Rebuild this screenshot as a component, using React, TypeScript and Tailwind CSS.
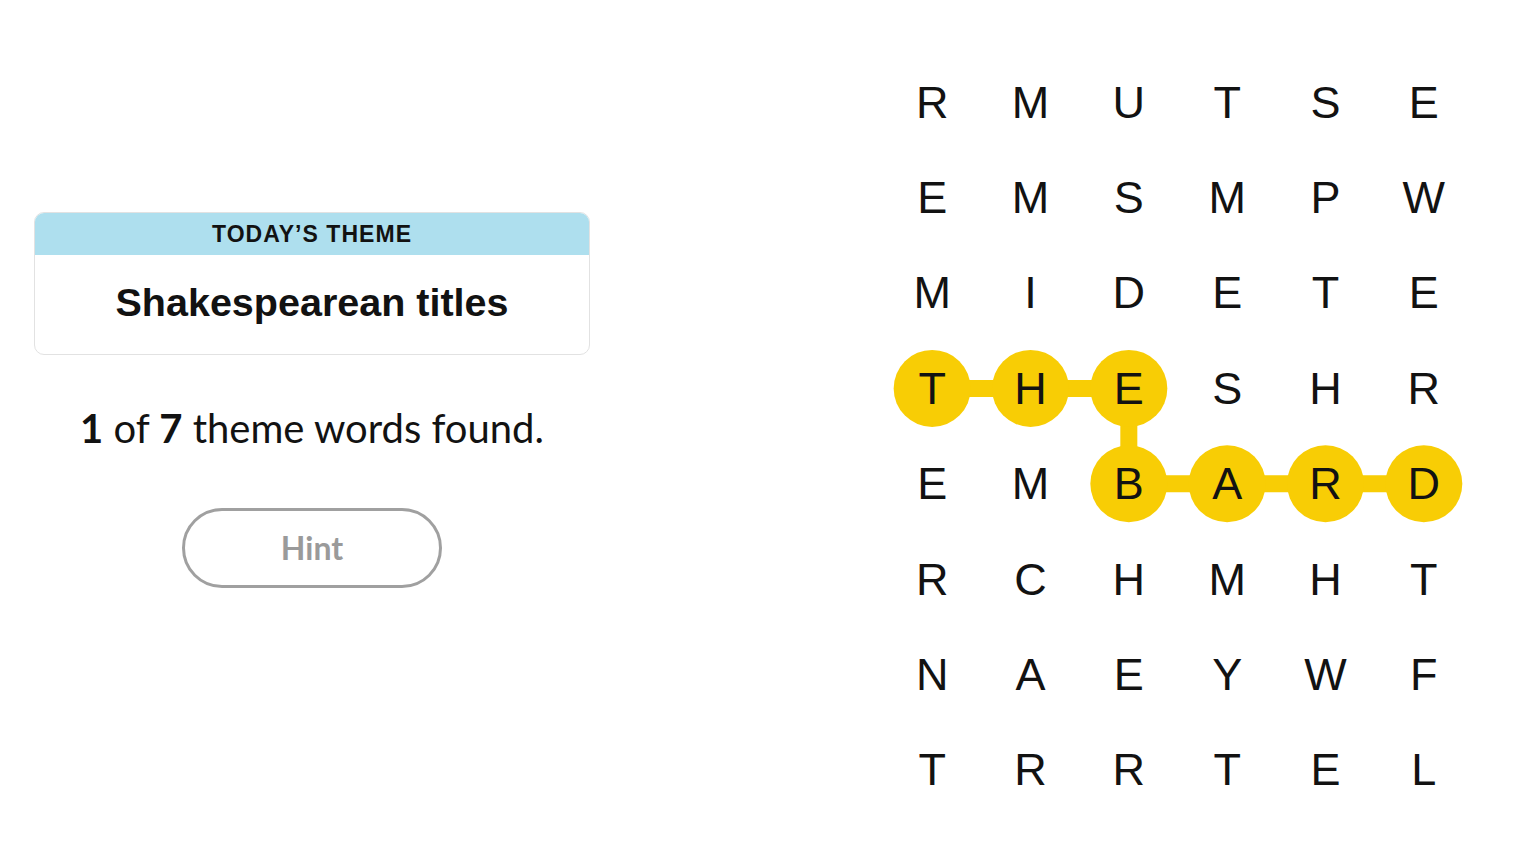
const grid = [
  "RMUTSE",
  "EMSMPW",
  "MIDETE",
  "THESHR",
  "EMBARD",
  "RCHMHT",
  "NAEYWF",
  "TRRTEL",
];

const CW = 98.33;
const RH = 95.4;

// spangram path: row, col
const path: [number, number][] = [
  [3, 0],
  [3, 1],
  [3, 2],
  [4, 2],
  [4, 3],
  [4, 4],
  [4, 5],
];

const center = ([r, c]: [number, number]) => [c * CW + CW / 2, r * RH + RH / 2 + 1.5];

function WordPath() {
  const pts = path.map(center);
  return (
    <svg className="absolute inset-0 pointer-events-none" width={590} height={763}>
      <polyline
        points={pts.map((p) => p.join(",")).join(" ")}
        fill="none"
        stroke="#f8cd05"
        strokeWidth={17}
      />
      {pts.map(([x, y], i) => (
        <circle key={i} cx={x} cy={y} r={38.5} fill="#f8cd05" />
      ))}
    </svg>
  );
}

export default function App() {
  return (
    <div className="flex h-[864px] w-[1536px] bg-white text-black">
      <div className="ml-[34px] mt-[212px] flex w-[556px] flex-col items-center">
        <div className="w-full overflow-hidden rounded-[10px] border border-[#e2e2e2]">
          <div
            className="flex h-[42px] items-center justify-center bg-[#aedfee] pt-[1px] text-[23px] font-bold tracking-[0.045em] text-[#121212]"
            style={{ fontFamily: '"Liberation Sans", Arial, sans-serif' }}
          >
            TODAY’S THEME
          </div>
          <div
            className="flex h-[99px] items-center justify-center pb-[3px] text-[39.5px] font-bold text-[#121212]"
            style={{ fontFamily: '"Liberation Sans", Arial, sans-serif' }}
          >
            Shakespearean titles
          </div>
        </div>
        <p
          className="mt-[49px] text-[40px] leading-[48px] text-[#121212]"
          style={{ fontFamily: "Lato, sans-serif" }}
        >
          <span className="font-bold">1</span> of <span className="font-bold">7</span> theme words found.
        </p>
        <button
          className="mt-[56px] flex h-[80px] w-[260px] items-center justify-center rounded-full border-[3px] border-[#a0a0a0] pb-[1px] text-[32px] font-bold text-[#9a9a9a]"
          style={{ fontFamily: "Lato, sans-serif" }}
        >
          Hint
        </button>
      </div>
      <div className="relative ml-[293px] mt-[53px] h-[763px] w-[590px]">
        <WordPath />
        <div
          className="relative grid grid-cols-6 grid-rows-8 pt-[1.5px]"
          style={{ fontFamily: '"Liberation Sans", Arial, sans-serif' }}
        >
          {grid.flatMap((row, r) =>
            row.split("").map((ch, c) => (
              <div
                key={`${r}-${c}`}
                className="flex h-[95.4px] items-center justify-center text-[45px] leading-none text-[#121212]"
              >
                {ch}
              </div>
            ))
          )}
        </div>
      </div>
    </div>
  );
}
